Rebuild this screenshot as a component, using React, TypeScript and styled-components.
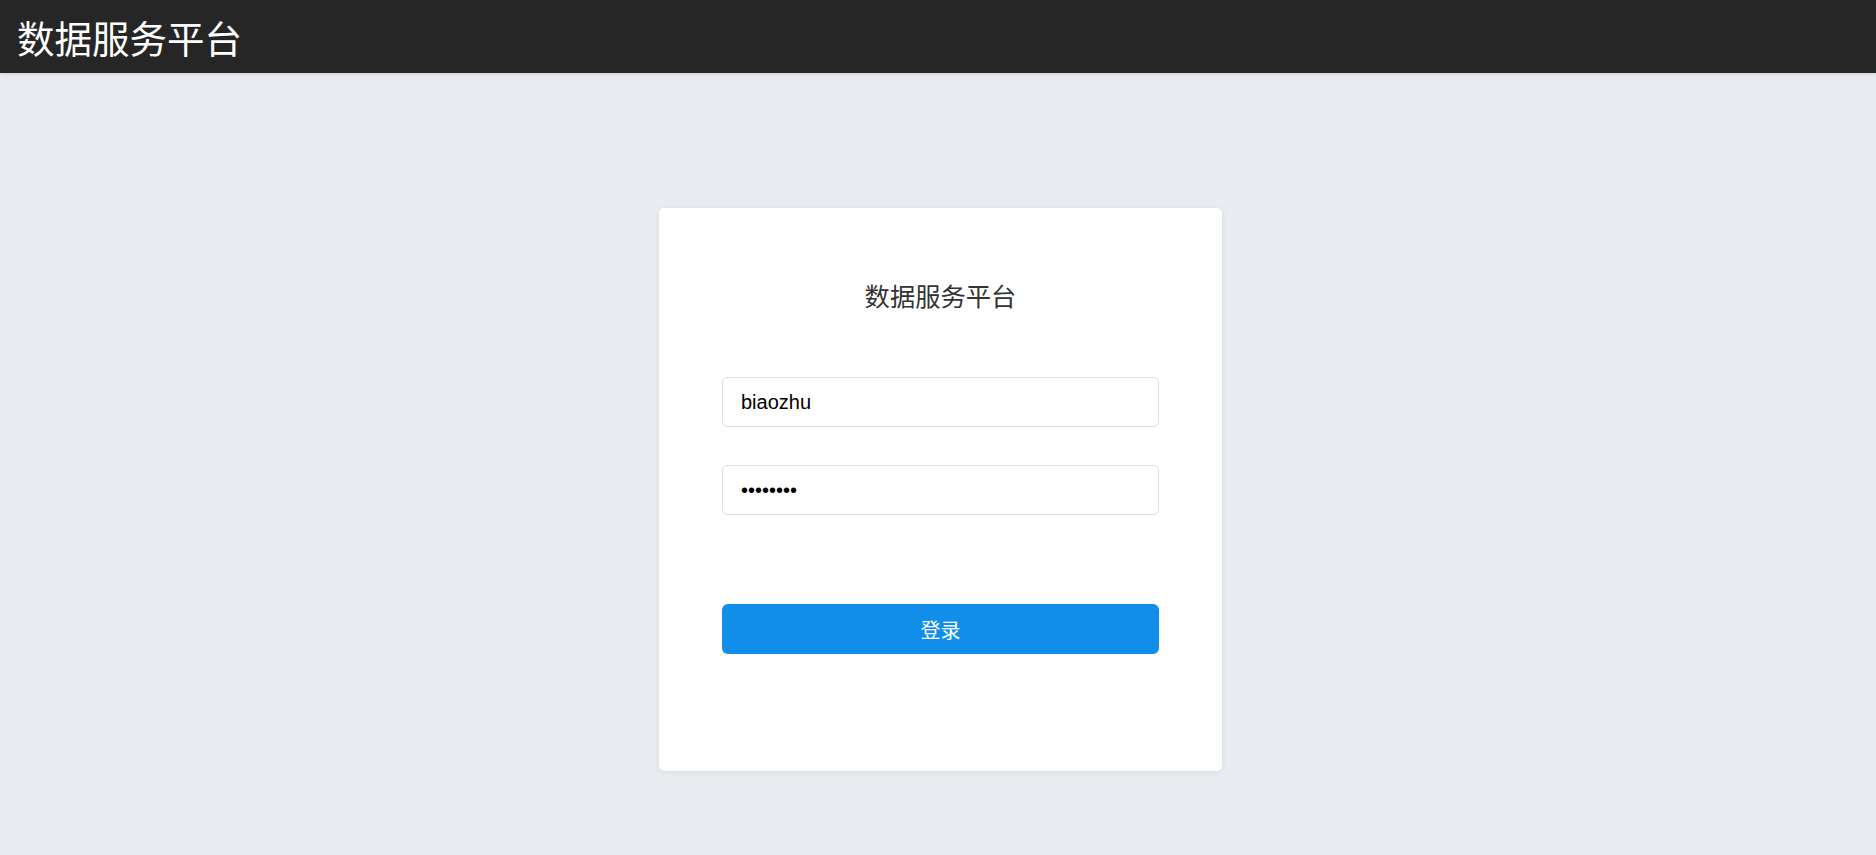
import React from "react";
import styled, { createGlobalStyle } from "styled-components";

const GlobalStyle = createGlobalStyle`
  html, body {
    margin: 0;
    padding: 0;
    background: #e9ecf1;
    font-family: "Liberation Sans", "Noto Sans CJK SC", sans-serif;
  }
  * { box-sizing: border-box; }
`;

const Page = styled.div`
  min-height: 855px;
  display: flex;
  flex-direction: column;
  background: #e9ecf1;
`;

const Header = styled.header`
  height: 73px;
  background: #262626;
  display: flex;
  align-items: center;
  padding-left: 17px;
  box-shadow: 0 1px 4px rgba(0, 0, 0, 0.12);
`;

const HeaderTitle = styled.h1`
  margin: 0;
  font-family: "Noto Sans CJK SC", sans-serif;
  font-weight: 400;
  font-size: 37.5px;
  line-height: 1;
  color: #ffffff;
`;

const Main = styled.main`
  display: flex;
  justify-content: center;
  padding-top: 135px;
  padding-left: 5px;
`;

const Card = styled.div`
  width: 563px;
  height: 563px;
  background: #ffffff;
  border-radius: 5px;
  box-shadow: 0 1px 6px rgba(0, 0, 0, 0.08);
  padding: 69px 63px 0;
  display: flex;
  flex-direction: column;
`;

const CardTitle = styled.h2`
  margin: 0 0 64px;
  text-align: center;
  font-family: "Noto Sans CJK SC", sans-serif;
  font-weight: 400;
  font-size: 25.3px;
  line-height: 36px;
  color: #333333;
`;

const Field = styled.input<{ $gap: number }>`
  display: block;
  width: 100%;
  height: 50px;
  margin: 0 0 ${(p) => p.$gap}px;
  padding: 0 18px;
  border: 1px solid #dedede;
  border-radius: 5px;
  background: #ffffff;
  font-family: "Liberation Sans", sans-serif;
  font-size: 20px;
  color: #000000;
  outline: none;
`;

const LoginButton = styled.button`
  display: block;
  width: 100%;
  height: 50px;
  border: none;
  border-radius: 6px;
  background: #108ee9;
  color: #ffffff;
  font-family: "Noto Sans CJK SC", sans-serif;
  font-size: 20px;
  cursor: pointer;
`;

export default function App() {
  return (
    <>
      <GlobalStyle />
      <Page>
        <Header>
          <HeaderTitle>数据服务平台</HeaderTitle>
        </Header>
        <Main>
          <Card>
            <CardTitle>数据服务平台</CardTitle>
            <Field $gap={38} type="text" defaultValue="biaozhu" />
            <Field $gap={89} type="password" defaultValue="12345678" />
            <LoginButton type="button">登录</LoginButton>
          </Card>
        </Main>
      </Page>
    </>
  );
}
